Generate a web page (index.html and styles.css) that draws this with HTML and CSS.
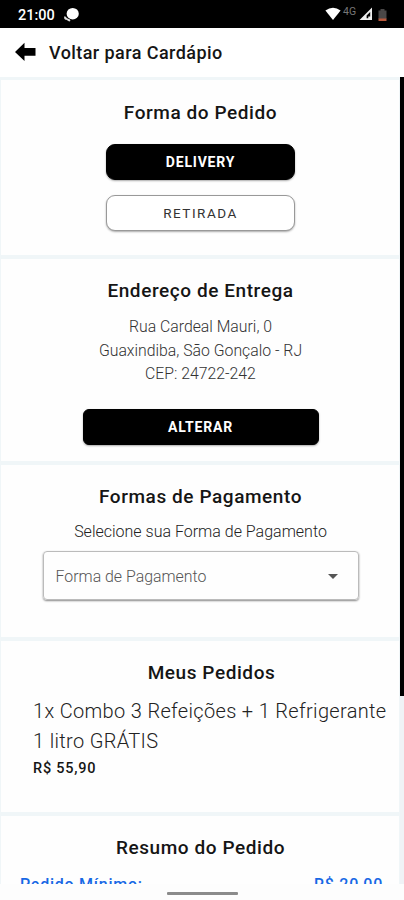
FILE: index.html
```html
<!DOCTYPE html>
<html lang="pt-BR">
<head>
<meta charset="utf-8">
<meta name="viewport" content="width=device-width, initial-scale=1">
<title>Cardápio</title>
<link rel="stylesheet" href="styles.css">
</head>
<body>
<div class="status">
  <span class="clock">21:00</span>
  <svg class="chat" width="17" height="16" viewBox="0 0 17 16"><ellipse cx="9.7" cy="6.7" rx="6.1" ry="5.8" fill="#fff"/><path d="M1.800 9c-1.500 1.700-.3 3.700 1.500 3.800l2.900 1.700 1.200-.6-.4-1.400-2.900-1.200z" fill="#ddd"/></svg>
  <svg class="wifi" width="16" height="14" viewBox="0 0 16 14"><path d="M.4 3.600Q8-2.200 15.600 3.600L8 13z" fill="#fff"/></svg>
  <span class="net">4G</span>
  <svg class="signal" width="14" height="14" viewBox="0 0 14 14"><path fill-rule="evenodd" d="M13 .5V13H.5zM11.200 5 7.600 8.600v2.700h1.700V9.500h1.900z" fill="#eee"/></svg>
  <svg class="battery" width="9" height="13" viewBox="0 0 9 13"><path d="M2.500 0h4v1.500H8.500V10H.5V1.500h2z" fill="#494747"/><path d="M.5 9.500h8V12h-8z" fill="#b9593c"/></svg>
</div>
<header class="top">
  <svg class="back" width="21" height="20" viewBox="0 0 21 20"><path d="M0 10 9.500 .8v5.200H20.500v7.800H9.500v5.200z"/></svg>
  <span>Voltar para Cardápio</span>
</header>
<div class="view">
  <main class="content">
    <section class="card s1">
      <h2>Forma do Pedido</h2>
      <button class="btn dark">DELIVERY</button>
      <button class="btn light">RETIRADA</button>
    </section>
    <section class="card s2">
      <h2>Endereço de Entrega</h2>
      <p class="address">Rua Cardeal Mauri, 0<br>Guaxindiba, São Gonçalo - RJ<br>CEP: 24722-242</p>
      <button class="btn dark wide">ALTERAR</button>
    </section>
    <section class="card s3">
      <h2>Formas de Pagamento</h2>
      <p class="hint">Selecione sua Forma de Pagamento</p>
      <div class="select"><span>Forma de Pagamento</span><svg width="10" height="5" viewBox="0 0 10 5"><path d="M0 0h10L5 5z" fill="#555"/></svg></div>
    </section>
    <section class="card s4">
      <h2 class="orders">Meus Pedidos</h2>
      <p class="item">1x Combo 3 Refeições + 1 Refrigerante<br>1 litro GRÁTIS</p>
      <p class="price">R$ 55,90</p>
    </section>
    <section class="card s5">
      <h2>Resumo do Pedido</h2>
      <p class="minimum"><span>Pedido Mínimo:</span><span>R$ 20,00</span></p>
    </section>
  </main>
  <div class="track"><div class="thumb"></div></div>
</div>
<footer class="nav"><div class="handle"></div></footer>
</body>
</html>
```

FILE: styles.css
```css
* { box-sizing: border-box; }
body { margin: 0; width: 404px; height: 900px; overflow: hidden; display: flex; flex-direction: column; background: #fff; color: #151515; font-family: Roboto, sans-serif; }
h2, p { margin: 0; white-space: nowrap; }
.status { height: 28px; flex: none; background: #000; color: #fff; display: flex; align-items: flex-start; padding-left: 18px; }
.clock { font-size: 14.500px; font-weight: 500; line-height: 18px; margin-top: 7px; width: 45px; }
.chat { margin-top: 7px; }
.wifi { margin: 7px 0 0 245px; }
.net { font-size: 10.500px; line-height: 12px; margin: 6px 0 0 2px; width: 14px; color: #777; }
.signal { margin: 7px 0 0 2px; }
.battery { margin: 9px 0 0 5px; }
.top { height: 49px; flex: none; display: flex; align-items: center; padding: 0 0 1px 15px; font-size: 18px; font-weight: 500; letter-spacing: .43px; }
.top .back { margin-right: 13px; }
.view { height: 807px; flex: none; display: flex; overflow: hidden; }
.content { width: 400px; flex: none; display: flex; flex-direction: column; padding: 3px 1px 0; gap: 4px; background: #f0f6f8; }
.card { background: #fefefe; flex: none; display: flex; flex-direction: column; align-items: center; padding: 20px 0 0 1px; }
.s1 { height: 175px; }
.s2 { height: 202px; }
.s3 { height: 172px; }
.s4 { height: 171px; }
.s5 { height: 100px; }
.track { width: 4px; background: #f0f2f6; }
.thumb { height: 619px; background: #000; }
h2 { font-size: 19px; font-weight: 500; line-height: 24px; letter-spacing: .57px; }
.s1 h2 { padding-top: 1px; }
.orders { margin-left: 22px; }
.btn { font: 500 14px/20px Roboto, sans-serif; width: 189px; height: 36px; border: 1px solid #000; border-radius: 9px; padding: 0; box-shadow: 0 1px 2px #aaa; }
.dark { background: #000; color: #fff; font-weight: 700; letter-spacing: .8px; }
.light { background: #fff; color: #333; border-color: #999; font-weight: 400; font-size: 13.500px; letter-spacing: 1.500px; margin-top: 15px; }
.s1 h2 + .btn { margin-top: 19px; }
.address { font-size: 15.800px; line-height: 23.500px; text-align: center; margin-top: 12px; color: #333; font-weight: 300; }
.wide { width: 236px; margin-top: 23px; border-radius: 6px; }
.hint { font-size: 16px; line-height: 22px; margin-top: 12px; font-weight: 300; color: #222; }
.select { width: 316px; height: 49px; margin-top: 8px; border: 1px solid #bbb; border-radius: 4px; box-shadow: 0 1px 2px #888; display: flex; align-items: center; justify-content: space-between; padding: 1px 20px 0 12px; color: #555; font-size: 15.900px; font-weight: 300; }
.item { align-self: flex-start; margin: 11px 0 0 31px; font-size: 20px; line-height: 30px; font-weight: 300; color: #222; letter-spacing: .33px; }
.price { align-self: flex-start; margin: 4px 0 0 31px; font-size: 14.500px; line-height: 18px; font-weight: 500; letter-spacing: .75px; }
.minimum { align-self: stretch; display: flex; justify-content: space-between; padding: 0 16px 0 18px; margin-top: 14px; font-size: 16px; line-height: 22px; font-weight: 500; color: #1768e5; letter-spacing: .75px; }
.nav { flex: none; height: 16px; background: #fdfdfd; display: flex; justify-content: center; }
.handle { width: 71px; height: 3px; margin-top: 7.500px; background: #8b8b8b; border-radius: 1px; }
```
